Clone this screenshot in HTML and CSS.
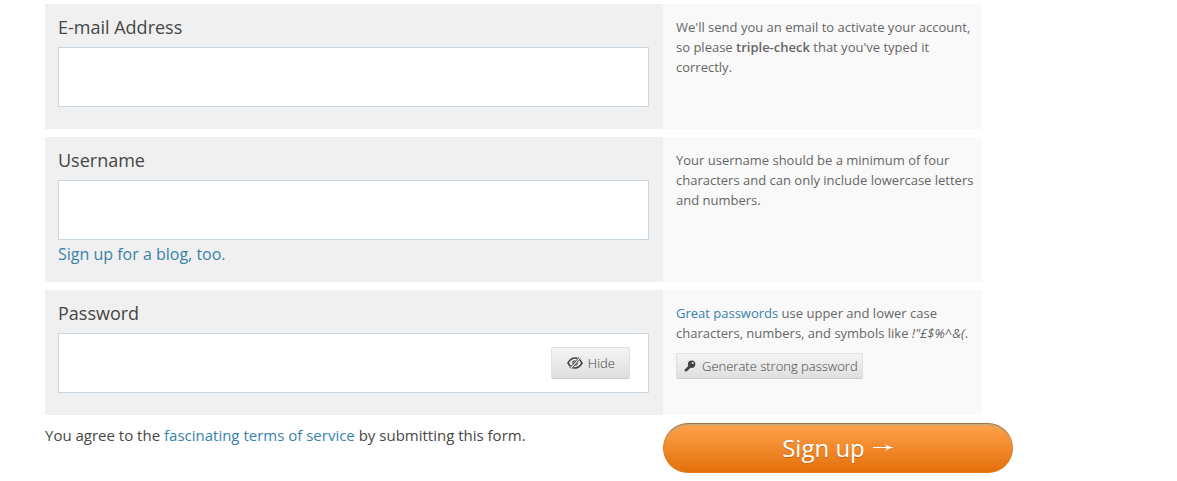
FILE: index.html
```
<!DOCTYPE html>
<html lang="en">
<head>
  <meta charset="UTF-8">
  <title>Sign up</title>
  <link rel="stylesheet" href="styles.css">
</head>
<body>

  <form class="signup">
    <div class="row">
      <div class="field">
        <label for="email">E-mail Address</label>
        <input type="email" id="email" name="email">
      </div>
      <div class="hint">
        <p>We'll send you an email to activate your account, so please <strong>triple-check</strong> that you've typed it correctly.</p>
      </div>
    </div>

    <div class="row">
      <div class="field">
        <label for="username">Username</label>
        <input type="text" id="username" name="username">
        <a class="blog-link" href="#">Sign up for a blog, too.</a>
      </div>
      <div class="hint">
        <p>Your username should be a minimum of four characters and can only include lowercase letters and numbers.</p>
      </div>
    </div>

    <div class="row">
      <div class="field">
        <label for="password">Password</label>
        <div class="password-box">
          <input type="password" id="password" name="password">
          <button type="button" class="button hide-button">
            <svg width="16" height="14" viewBox="0 0 16 14" fill="none" stroke="#444">
              <path d="M1 7C3 3.500 5.300 2 8 2s5 1.500 7 5c-2 3.500-4.300 5-7 5S3 10.500 1 7z" stroke-width="1.600"/>
              <circle cx="8" cy="7" r="2.800" fill="#555" stroke="none"/>
              <path d="M3.500 12.500L13 1.500" stroke="#eee" stroke-width="3"/>
              <path d="M2.800 12L12 1.300M4.800 12.700L13.300 2.500" stroke-width="1"/>
            </svg>
            Hide
          </button>
        </div>
      </div>
      <div class="hint">
        <p><a href="#">Great passwords</a> use upper and lower case characters, numbers, and symbols like <em>!"£$%^&amp;(</em>.</p>
        <button type="button" class="button generate-button">
          <svg width="12" height="12" viewBox="0 0 12 12">
            <path d="M1.700 10.500L6 6.200" stroke="#444" stroke-width="2.200" stroke-linecap="round"/>
            <path d="M2.600 10.700l1.700-.2.200-1.500 1.500-.2.200-1.600-2-1.200-3.400 3.700z" fill="#444"/>
            <circle cx="7.600" cy="4.200" r="3.700" fill="#444"/>
            <circle cx="8.700" cy="3.100" r="1" fill="#eee"/>
          </svg>
          Generate strong password
        </button>
      </div>
    </div>

    <div class="submit-row">
      <p>You agree to the <a href="#">fascinating terms of service</a> by submitting this form.</p>
      <button type="submit" class="submit-button">
        Sign up
        <svg width="21" height="9" viewBox="0 0 21 9">
          <path d="M0 4.500h17" stroke="#fff" stroke-width="1"/>
          <path d="M12 1c2 1.800 5 2.900 9 3.500-4 .6-7 1.700-9 3.500l2-3.500z" fill="#fff"/>
        </svg>
      </button>
    </div>
  </form>

</body>
</html>
```

FILE: styles.css
```
body {
  margin: 0;
  background: #fff;
  color: #464646;
  font-family: "Open Sans", sans-serif;
}

p {
  margin: 0;
}

a {
  color: #3782aa;
  text-decoration: none;
}

a:hover {
  text-decoration: underline;
}

.signup {
  max-width: 968px;
  margin: 4px 45px 0;
}

.row {
  display: grid;
  grid-template-columns: 618fr 319fr;
  min-height: 125px;
  margin: 0 31px 8px 0;
}

.field {
  background: #f0f0f0;
  padding: 11px 14px 14px 13px;
}

.field label {
  display: block;
  margin-bottom: 8px;
  font-size: 18px;
  line-height: 24px;
}

.field input {
  display: block;
  box-sizing: border-box;
  width: 100%;
  height: 60px;
  padding: 0 16px;
  border: 1px solid #c8d7e1;
  border-radius: 0;
  background: #fff;
  font: inherit;
  font-size: 20px;
}

.blog-link {
  display: block;
  font-size: 16px;
  line-height: 28px;
}

.hint {
  background: #f9f9f9;
  padding: 13px 4px 13px 13px;
  color: #666;
  font-size: 13px;
  line-height: 20px;
}

.hint strong {
  font-weight: 600;
}

.button {
  display: flex;
  align-items: center;
  box-sizing: border-box;
  border: 1px solid #e0e0e0;
  border-bottom-color: #ccc;
  border-radius: 2px;
  background: linear-gradient(#f4f4f4, #dfdfdf);
  color: #464646;
  font-family: inherit;
  font-size: 13px;
  font-weight: 300;
  cursor: pointer;
}

.password-box {
  position: relative;
}

/* sits inside the password box */
.hide-button {
  position: absolute;
  top: 14px;
  right: 19px;
  gap: 5px;
  height: 32px;
  padding: 0 14px 0 15px;
}

.generate-button {
  gap: 6px;
  height: 26px;
  margin-top: 10px;
  padding: 0 4px 0 7px;
  white-space: nowrap;
}

.submit-row {
  display: flex;
  justify-content: space-between;
  align-items: flex-start;
}

.submit-row p {
  font-size: 15px;
  line-height: 24px;
}

.submit-button {
  display: flex;
  justify-content: center;
  align-items: center;
  gap: 8px;
  width: 350px;
  height: 50px;
  padding: 0 0 2px;
  border: 1px solid #e07a1c;
  border-top-color: #a87440;
  border-radius: 25px;
  background: linear-gradient(#ffa24c, #e4700b);
  box-shadow: inset 0 2px 0 rgba(190, 170, 130, 0.7);
  color: #fff;
  font-family: inherit;
  font-size: 24px;
  text-shadow: 0 1px 1px rgba(0, 0, 0, 0.2);
  cursor: pointer;
}
```
